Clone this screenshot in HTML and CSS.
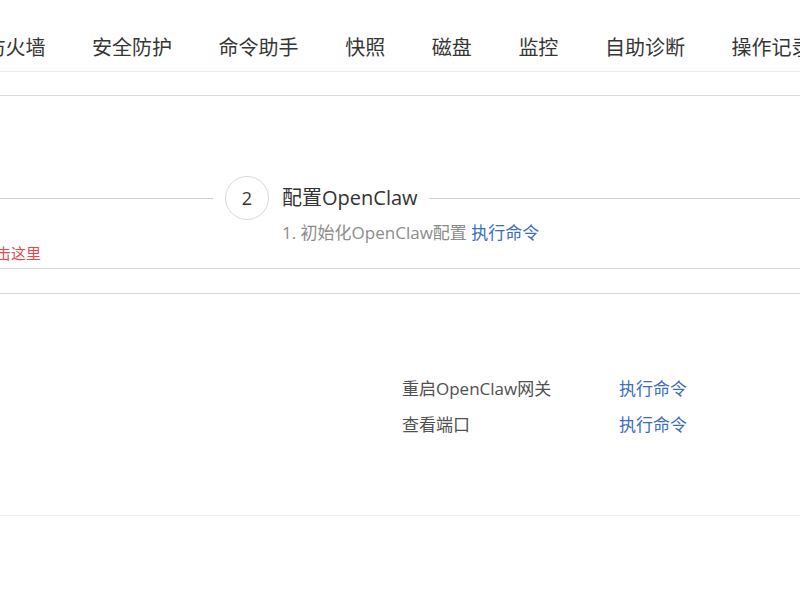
FILE: index.html
```html
<!DOCTYPE html>
<html lang="zh-CN">
<head>
<meta charset="utf-8">
<title>OpenClaw</title>
<link rel="stylesheet" href="styles.css">
</head>
<body>
  <nav class="tabbar">
    <ul class="tabs">
      <li class="tab">防火墙</li>
      <li class="tab">安全防护</li>
      <li class="tab">命令助手</li>
      <li class="tab">快照</li>
      <li class="tab">磁盘</li>
      <li class="tab">监控</li>
      <li class="tab">自助诊断</li>
      <li class="tab">操作记录</li>
    </ul>
  </nav>

  <section class="card card-steps">
    <div class="steps">
      <div class="step step-prev">
        <div class="step-head"><span class="rail"></span></div>
        <div class="step-desc danger">如需帮助请点击这里</div>
      </div>
      <div class="step step-current">
        <div class="step-head">
          <span class="step-num">2</span>
          <span class="step-title">配置OpenClaw</span>
          <span class="rail"></span>
        </div>
        <div class="step-desc sub">1. 初始化OpenClaw配置 <a class="link">执行命令</a></div>
      </div>
    </div>
  </section>

  <section class="card card-list">
    <div class="cmd-list">
      <div class="cmd-label">重启OpenClaw网关</div>
      <a class="link cmd-action">执行命令</a>
      <div class="cmd-label">查看端口</div>
      <a class="link cmd-action">执行命令</a>
    </div>
  </section>
</body>
</html>
```

FILE: styles.css
```css
* { box-sizing: border-box; }
html, body { margin: 0; padding: 0; background: #fff; }
body {
  width: 800px;
  height: 600px;
  overflow: hidden;
  font-family: "Open Sans", "Noto Sans CJK SC", sans-serif;
  color: #333;
}

.tabbar {
  height: 72px;
  border-bottom: 1px solid #ebebeb;
  display: flex;
  align-items: flex-end;
}
.tabs {
  list-style: none;
  margin: 0 0 9px -14.6px;
  padding: 0;
  display: flex;
  gap: 46.6px;
  white-space: nowrap;
}
.tab {
  font-size: 20px;
  line-height: 28px;
  color: #363636;
}

.card {
  border-top: 1px solid #dcdcdc;
}
.card-steps {
  margin-top: 23px;
  padding: 80px 0 5px;
  border-bottom: 1px solid #d8d8d8;
}
.steps {
  display: flex;
  gap: 12px;
}
.step-prev {
  flex: 0 0 213px;
}
.step-current {
  flex: 1;
  min-width: 0;
}
.step-head {
  height: 44px;
  display: flex;
  align-items: center;
}
.rail {
  flex: 1;
  height: 1px;
  background: #cfcfcf;
}
.step-num {
  flex: 0 0 44px;
  width: 44px;
  height: 44px;
  border: 1px solid #d9d9d9;
  border-radius: 50%;
  display: flex;
  align-items: center;
  justify-content: center;
  font-size: 18px;
  color: #333;
  margin-right: 13px;
}
.step-title {
  font-size: 20px;
  line-height: 44px;
  color: #333;
  margin-right: 11px;
  white-space: nowrap;
}
.step-desc {
  line-height: 20px;
  white-space: nowrap;
}
.danger {
  color: #e5484d;
  margin: 23px 0 0 -94px;
  font-size: 15px;
}
.sub {
  color: #8c8c8c;
  font-size: 17px;
  line-height: 24px;
  margin: 1px 0 0 57px;
}
.link {
  color: #3b6cc4;
  cursor: pointer;
}

.card-list {
  margin-top: 24px;
  padding: 77px 0 72px;
  border-bottom: 1px solid #f0f0f0;
  border-top-color: #d8d8d8;
}
.cmd-list {
  display: grid;
  grid-template-columns: 217px auto;
  padding-left: 402px;
  font-size: 17px;
  line-height: 36px;
}
.cmd-label {
  color: #505050;
}
```
